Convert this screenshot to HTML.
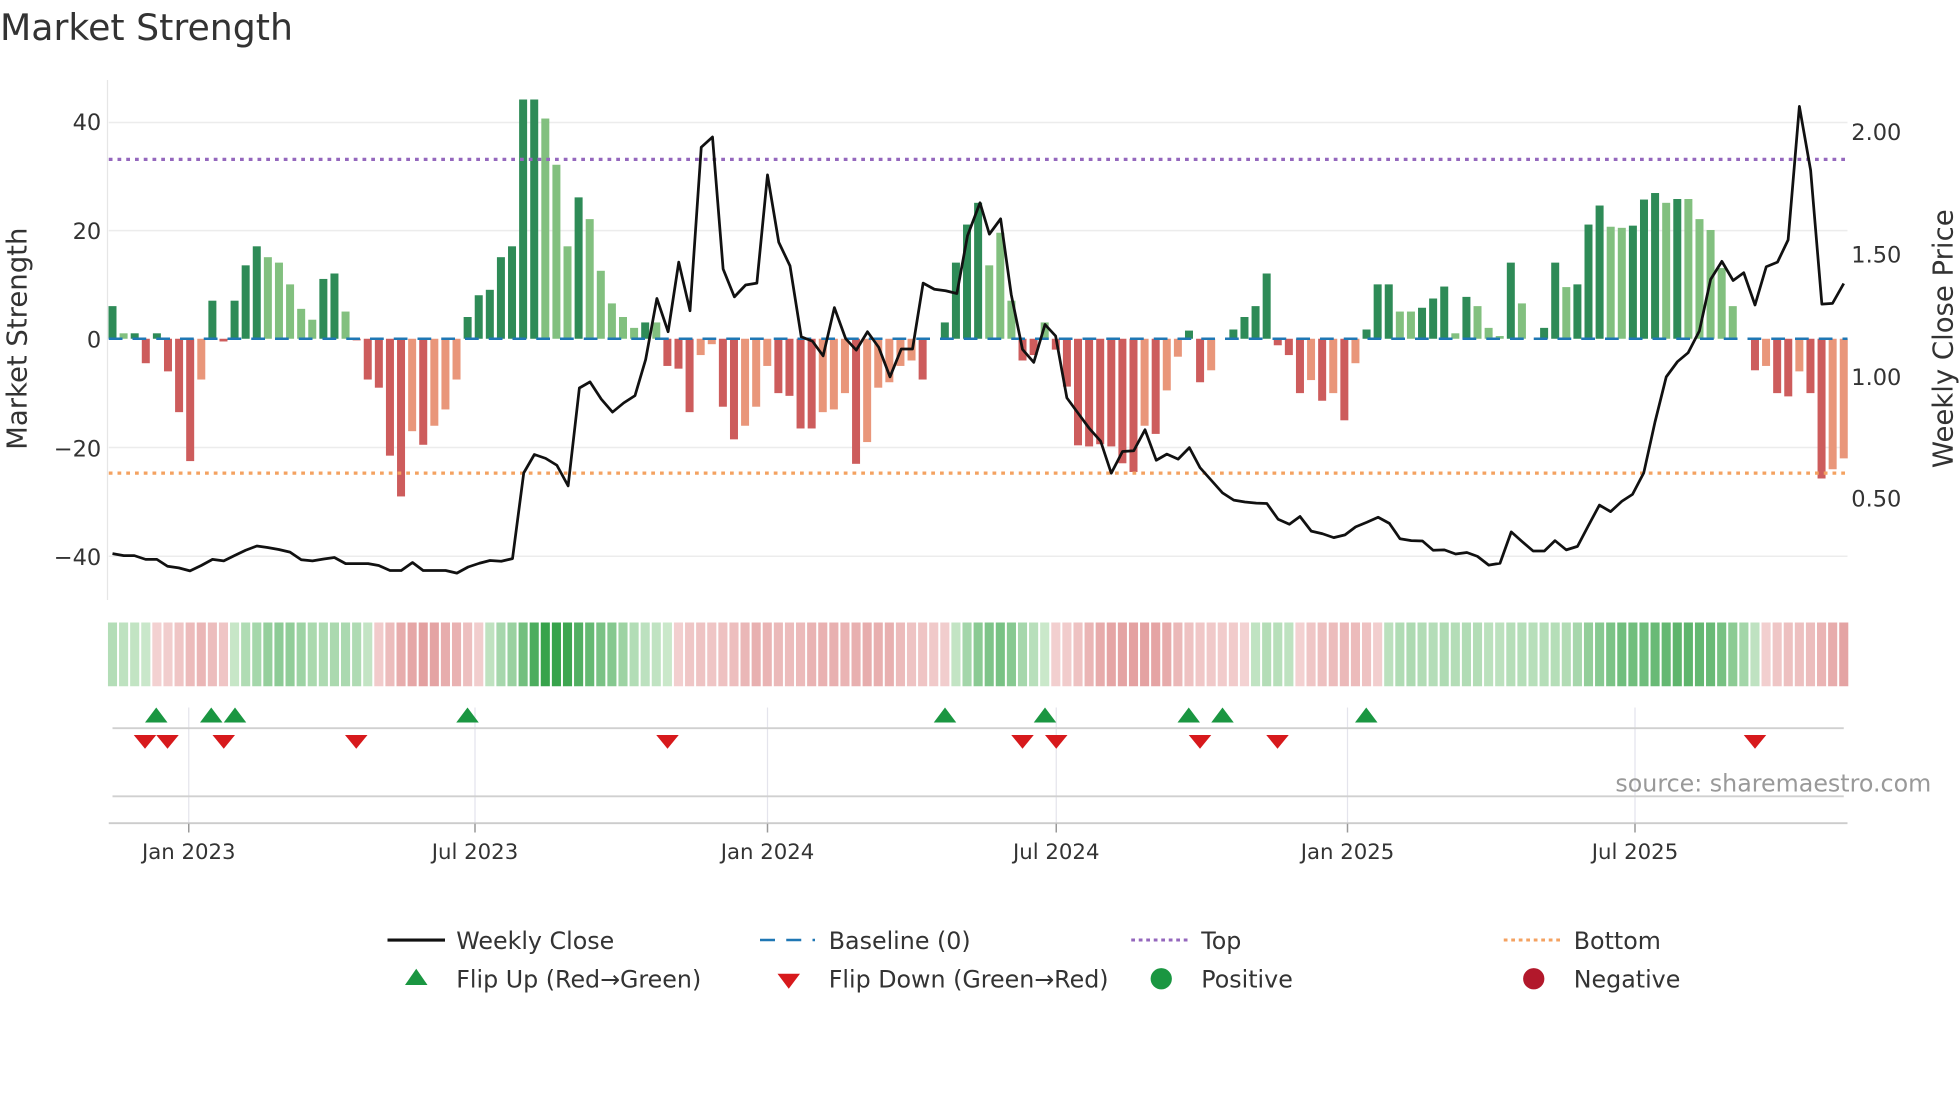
<!DOCTYPE html>
<html><head><meta charset="utf-8"><style>
html,body{margin:0;padding:0;background:#fff;width:1960px;height:1102px;overflow:hidden}
svg{display:block}
text{font-family:"DejaVu Sans","Liberation Sans",sans-serif}
</style></head><body>
<svg id="s" width="1960" height="1102" viewBox="0 0 1568 881.6" xmlns="http://www.w3.org/2000/svg">
<text x="0" y="32" font-size="29" fill="#333">Market Strength</text>
<g stroke="#ececec" stroke-width="1.2">
<line x1="87" x2="1478" y1="98" y2="98"/><line x1="87" x2="1478" y1="184.5" y2="184.5"/>
<line x1="87" x2="1478" y1="358" y2="358"/><line x1="87" x2="1478" y1="445" y2="445"/>
</g>
<line x1="86" x2="86" y1="64" y2="480" stroke="#e6e6e6" stroke-width="1"/>
<g font-size="18" fill="#333" text-anchor="end">
<text x="81" y="104">40</text><text x="81" y="191">20</text><text x="81" y="278">0</text>
<text x="81" y="365">−20</text><text x="81" y="452">−40</text>
</g>
<g font-size="18" fill="#333">
<text x="1481" y="112">2.00</text><text x="1481" y="210">1.50</text><text x="1481" y="308">1.00</text><text x="1481" y="405">0.50</text>
</g>
<text transform="translate(21,271) rotate(-90)" font-size="22" fill="#333" text-anchor="middle">Market Strength</text>
<text transform="translate(1562,271) rotate(-90)" font-size="22" fill="#333" text-anchor="middle">Weekly Close Price</text>
<g id="bars"></g>
<line x1="87" x2="1478" y1="271" y2="271" stroke="#1f77b4" stroke-width="2" stroke-dasharray="11,8"/>
<line x1="87" x2="1478" y1="127.5" y2="127.5" stroke="#9467bd" stroke-width="2.6" stroke-dasharray="3,4"/>
<line x1="87" x2="1478" y1="378.5" y2="378.5" stroke="#f4a261" stroke-width="2.6" stroke-dasharray="3,4"/>
<polyline id="price" fill="none" stroke="#111" stroke-width="2.2" stroke-linejoin="round"/>
<g id="heat"></g>
<g stroke="#e4e4ec" stroke-width="1">
<line x1="151" x2="151" y1="566" y2="658"/><line x1="380" x2="380" y1="566" y2="658"/><line x1="614" x2="614" y1="566" y2="658"/>
<line x1="845" x2="845" y1="566" y2="658"/><line x1="1078" x2="1078" y1="566" y2="658"/><line x1="1308" x2="1308" y1="566" y2="658"/>
</g>
<line x1="90" x2="1475" y1="582.5" y2="582.5" stroke="#d0d0d0" stroke-width="1.5"/>
<line x1="90" x2="1475" y1="637" y2="637" stroke="#d0d0d0" stroke-width="1.5"/>
<line x1="87" x2="1478" y1="658.5" y2="658.5" stroke="#ccc" stroke-width="1.5"/>
<g stroke="#999" stroke-width="1.2">
<line x1="151" x2="151" y1="659" y2="666"/><line x1="380" x2="380" y1="659" y2="666"/><line x1="614" x2="614" y1="659" y2="666"/>
<line x1="845" x2="845" y1="659" y2="666"/><line x1="1078" x2="1078" y1="659" y2="666"/><line x1="1308" x2="1308" y1="659" y2="666"/>
</g>
<g id="marks"></g>
<text x="1545" y="633" font-size="19" fill="#999" text-anchor="end">source: sharemaestro.com</text>
<g font-size="17" fill="#333" text-anchor="middle">
<text x="151" y="687">Jan 2023</text><text x="380" y="687">Jul 2023</text><text x="614" y="687">Jan 2024</text>
<text x="845" y="687">Jul 2024</text><text x="1078" y="687">Jan 2025</text><text x="1308" y="687">Jul 2025</text>
</g>
<g font-size="19" fill="#333">
<line x1="310" x2="356" y1="752" y2="752" stroke="#111" stroke-width="2.5"/><text x="365" y="759">Weekly Close</text>
<line x1="608" x2="652" y1="752" y2="752" stroke="#1f77b4" stroke-width="2" stroke-dasharray="12,9"/><text x="663" y="759">Baseline (0)</text>
<line x1="905" x2="950" y1="752" y2="752" stroke="#9467bd" stroke-width="2.4" stroke-dasharray="3,3"/><text x="961" y="759">Top</text>
<line x1="1203" x2="1248" y1="752" y2="752" stroke="#f4a261" stroke-width="2.4" stroke-dasharray="3,3"/><text x="1259" y="759">Bottom</text>
<polygon points="324,788 342,788 333,775" fill="#1a9641"/><text x="365" y="790">Flip Up (Red→Green)</text>
<polygon points="622,779 640,779 631,791" fill="#d7191c"/><text x="663" y="790">Flip Down (Green→Red)</text>
<circle cx="929" cy="783" r="8.5" fill="#1a9641"/><text x="961" y="790">Positive</text>
<circle cx="1227" cy="783" r="8.5" fill="#b2182b"/><text x="1259" y="790">Negative</text>
</g>
</svg>
<script>
var V=[[6,'d'],[1,'l'],[1,'d'],[-4.5,'r'],[1,'d'],[-6,'r'],[-13.5,'r'],[-22.5,'r'],[-7.5,'o'],[7,'d'],[-0.5,'r'],[7,'d'],[13.5,'d'],[17,'d'],[15,'l'],[14,'l'],[10,'l'],[5.5,'l'],[3.5,'l'],[11,'d'],[12,'d'],[5,'l'],[-0.3,'r'],[-7.5,'r'],[-9,'r'],[-21.5,'r'],[-29,'r'],[-17,'o'],[-19.5,'r'],[-16,'o'],[-13,'o'],[-7.5,'o'],[4,'d'],[8,'d'],[9,'d'],[15,'d'],[17,'d'],[44,'d'],[44,'d'],[40.5,'l'],[32,'l'],[17,'l'],[26,'d'],[22,'l'],[12.5,'l'],[6.5,'l'],[4,'l'],[2,'l'],[3,'d'],[3,'l'],[-5,'r'],[-5.5,'r'],[-13.5,'r'],[-3,'o'],[-1,'o'],[-12.5,'r'],[-18.5,'r'],[-16,'o'],[-12.5,'o'],[-5,'o'],[-10,'r'],[-10.5,'r'],[-16.5,'r'],[-16.5,'r'],[-13.5,'o'],[-13,'o'],[-10,'o'],[-23,'r'],[-19,'o'],[-9,'o'],[-8,'o'],[-5,'o'],[-4,'o'],[-7.5,'r'],[0,'d'],[3,'d'],[14,'d'],[21,'d'],
[25,'d'],[13.5,'l'],[19.5,'l'],[7,'l'],[-4,'r'],[-3,'r'],[3,'l'],[-2,'r'],[-8.8,'r'],[-19.6,'r'],[-19.8,'r'],[-19.4,'r'],[-19.8,'r'],[-22.9,'r'],[-24.5,'r'],[-16,'o'],[-17.5,'r'],[-9.5,'o'],[-3.3,'o'],[1.5,'d'],[-8,'r'],[-5.8,'o'],[0,'d'],[1.7,'d'],[4,'d'],[6,'d'],[12,'d'],[-1.2,'r'],[-3,'r'],[-10,'r'],[-7.6,'o'],[-11.4,'r'],[-10,'o'],[-15,'r'],[-4.5,'o'],[1.7,'d'],[10,'d'],[10,'d'],[5,'l'],[5,'l'],[5.7,'d'],[7.4,'d'],[9.6,'d'],[1,'l'],[7.7,'d'],[6,'l'],[2,'l'],[0.5,'l'],[14,'d'],[6.5,'l'],[0,'d'],[2,'d'],[14,'d'],[9.5,'l'],[10,'d'],[21,'d'],[24.5,'d'],[20.6,'l'],[20.4,'l'],[20.8,'d'],[25.6,'d'],[26.8,'d'],[25,'l'],[25.7,'d'],[25.7,'l'],[22,'l'],[20,'l'],[13,'l'],[6,'l'],[0,'d'],[-5.8,'r'],[-5,'o'],[-10,'r'],[-10.6,'r'],[-6,'o'],[-10,'r'],[-25.7,'r'],[-24,'o'],[-22,'o']];
var C={d:'#2e8b57',l:'#82c07f',r:'#cd5c5c',o:'#e9967a'};
var N=V.length,x0=90,x1=1475,st=(x1-x0)/(N-1),ns='http://www.w3.org/2000/svg';
function el(t,a,p){var e=document.createElementNS(ns,t);for(var k in a)e.setAttribute(k,a[k]);document.getElementById(p).appendChild(e);}
for(var i=0;i<N;i++){var v=V[i][0],x=x0+st*i,y0=271,h=Math.abs(v)*4.35;
 if(h<0.5)continue;
 el('rect',{x:x-3.2,y:v>0?y0-h:y0,width:6.4,height:h,fill:C[V[i][1]]},'bars');}
for(var i=0;i<N;i++){var s=0,c=0;for(var j=i-3;j<=i;j++){if(j>=0){s+=V[j][0];c++;}}var m=s/c;var a=Math.min(1,Math.abs(m)/35);
 var col;if(m>=0){col='rgb('+Math.round(205-150*a)+','+Math.round(233-70*a)+','+Math.round(205-130*a)+')';}
 else{col='rgb('+Math.round(243-25*a)+','+Math.round(210-80*a)+','+Math.round(210-80*a)+')';}
 el('rect',{x:x0+st*i-st/2+0.8,y:498,width:st-1.6,height:51,fill:col},'heat');}
var P1=[[180,1447],[198,1452],[215,1452],[233,1462],[251,1462],[268,1480],[286,1484],[304,1492],[322,1478],[340,1462],[358,1466],[375,1452],[393,1438],[411,1427],[428,1431],[446,1436],[464,1443],[482,1463],[500,1466],[518,1461],[535,1457],[553,1473],[571,1473],[589,1473],[606,1478],[624,1491],[642,1491],[660,1470],[677,1491],[695,1491],[713,1491],[731,1498],[749,1482],[767,1472],[784,1465],[802,1467],[820,1460],[838,1236],[855,1188],[873,1198],[891,1216],[909,1270],[927,1014],[944,998],[962,1043],[980,1077],[998,1053],[1016,1034],[1033,940],[1051,780],[1069,867],[1086,685],[1104,812],[1122,385],[1140,358],[1157,703],[1175,776],[1193,745],[1211,740],[1228,457],[1246,633],[1264,695],[1282,880],[1300,892],[1317,930],[1335,804],[1353,885],[1370,915],[1388,867],[1406,908],[1424,985],[1442,912],[1460,912],[1477,740],[1495,756],[1513,760],[1531,767],[1548,616]];
var P2=[[0,530],[15,612],[33,572],[50,770],[68,913],[86,947],[104,848],[121,878],[139,1040],[157,1080],[175,1120],[193,1153],[210,1237],[228,1180],[246,1178],[264,1123],[282,1203],[299,1187],[317,1200],[335,1170],[352,1222],[370,1255],[388,1288],[406,1307],[424,1312],[442,1315],[459,1316],[477,1357],[495,1370],[512,1350],[530,1388],[548,1395],[566,1405],[584,1398],[601,1377],[619,1365],[637,1352],[655,1368],[672,1408],[690,1413],[708,1414],[725,1438],[743,1437],[761,1448],[779,1444],[796,1454],[814,1477],[832,1472],[850,1390],[867,1415],[885,1440],[903,1440],[920,1413],[938,1437],[956,1428],[973,1375],[991,1320],[1009,1337],[1027,1310],[1044,1292],[1062,1236],[1080,1103],[1098,985],[1116,945],[1133,922],[1151,865],[1169,730],[1187,683],[1205,733],[1222,713],[1240,797],[1258,697],[1276,685],[1293,627],[1311,278],[1329,445],[1347,795],[1364,793],[1382,741]];
var k=0.3061,pts=[];
P1.forEach(function(p){pts.push((p[0]/2).toFixed(1)+','+(p[1]*k).toFixed(1));});
P2.forEach(function(p){pts.push((784+p[0]/2).toFixed(1)+','+(p[1]*k).toFixed(1));});
document.getElementById('price').setAttribute('points',pts.join(' '));
[125,169,188,374,756,836,951,978,1093].forEach(function(x){el('polygon',{points:(x-9)+',578 '+(x+9)+',578 '+x+',566',fill:'#1a9641'},'marks');});
[116,134,179,285,534,818,845,960,1022,1404].forEach(function(x){el('polygon',{points:(x-9)+',588 '+(x+9)+',588 '+x+',599',fill:'#d7191c'},'marks');});
</script>
</body></html>
